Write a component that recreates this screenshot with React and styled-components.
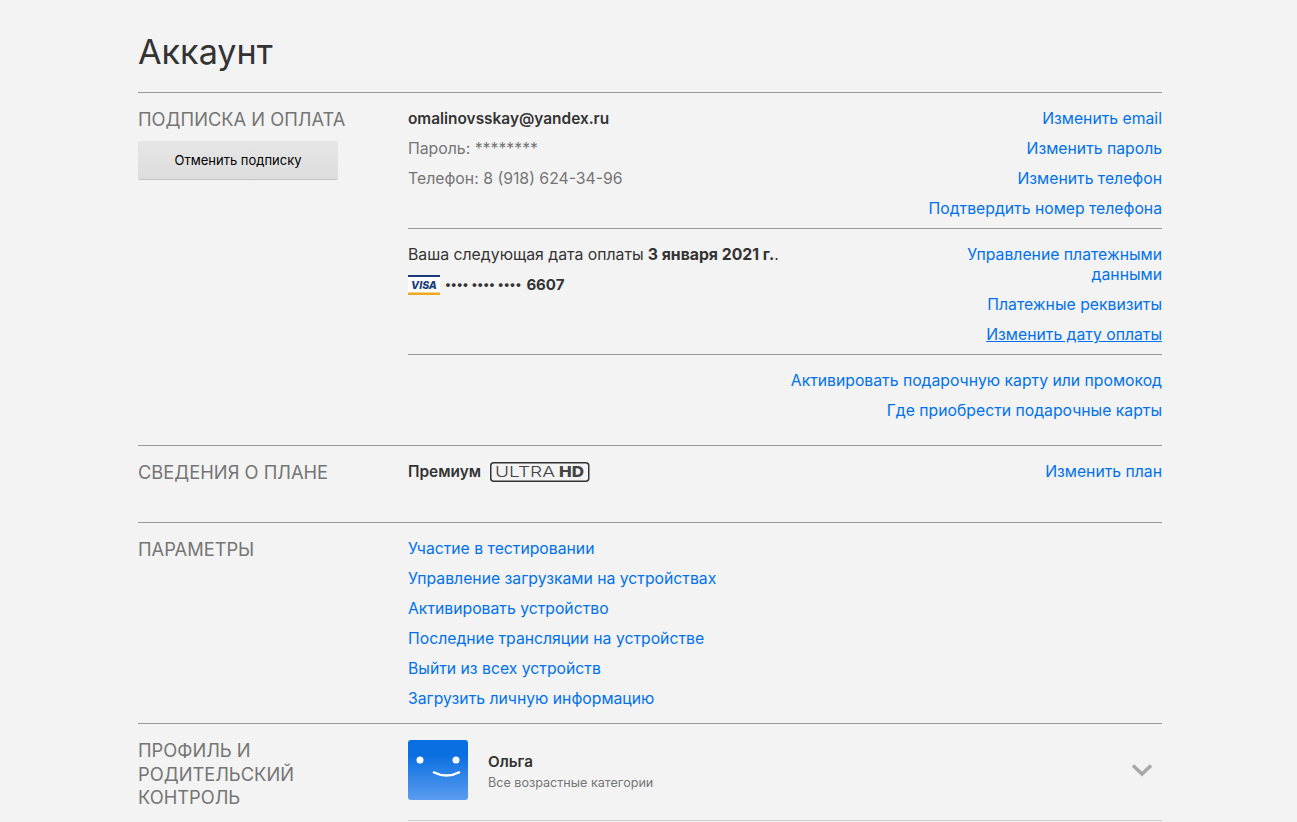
import React from 'react';
import styled, { createGlobalStyle } from 'styled-components';

const Global = createGlobalStyle`
  html, body { margin: 0; padding: 0; background: #f3f3f3; height: 100%; overflow: hidden; }
  body { font-family: Inter, "Noto Sans", "Liberation Sans", sans-serif; color: #333; }
`;
const Page = styled.main`
  width: 1024px;
  margin-left: 138px;
  height: 822px;
  overflow: hidden;
`;
const Title = styled.h1`
  margin: 0;
  height: 92px;
  padding-top: 29px;
  box-sizing: border-box;
  font-size: 34.2px;
  line-height: 46px;
  font-weight: 400;
  color: #333;
`;
const Section = styled.section`
  display: grid;
  grid-template-columns: 270px 754px;
  border-top: 1px solid #999;
  padding-bottom: ${p => p.$pb || 0}px;
`;
const Side = styled.div`
  padding-top: 15px;
`;
const Heading = styled.h2`
  margin: 0;
  width: 215px;
  font-size: 18.3px;
  line-height: 23.5px;
  font-weight: 400;
  color: #757575;
  text-transform: uppercase;
`;
const CancelButton = styled.button`
  display: block;
  width: 200px;
  height: 38px;
  margin-top: 9px;
  padding: 0;
  border: 0;
  border-radius: 2px;
  background: linear-gradient(#e6e6e6, #dddddd);
  box-shadow: 0 1px 0 rgba(0, 0, 0, 0.2);
  font: 400 13px Inter, sans-serif;
  color: #000;
`;
const Main = styled.div`
  padding-top: 10px;
`;
const Block = styled.div`
  display: flex;
  justify-content: space-between;
  padding-bottom: 5px;
  border-bottom: ${p => (p.$last ? '0' : '1px solid #999')};
  margin-bottom: ${p => (p.$last ? '0' : '10px')};
`;
const Col = styled.div`
  display: flex;
  flex-direction: column;
  align-items: ${p => (p.$right ? 'flex-end' : 'flex-start')};
  max-width: ${p => p.$max || 'none'};
`;
const Row = styled.div`
  display: flex;
  align-items: center;
  padding: 6px 0 4px;
  font-size: ${p => (p.$bold ? '15.4px' : '15.8px')};
  line-height: 20px;
  color: ${p => (p.$muted ? '#757575' : '#333')};
  font-weight: ${p => (p.$bold ? 600 : 400)};
  white-space: nowrap;
`;
const PlanRow = styled(Row)`
  height: 20px;
`;
const Strong = styled.b`
  font-weight: 700;
  margin-left: 4px;
`;
const CardNumber = styled.b`
  font-size: 15px;
  font-weight: 700;
  margin-left: 5px;
`;
const Link = styled.a`
  display: block;
  padding: 6px 0 4px;
  font-size: 15.75px;
  line-height: 20px;
  color: #0071eb;
  text-align: ${p => (p.$left ? 'left' : 'right')};
  text-decoration: ${p => (p.$under ? 'underline' : 'none')};
`;
const CardDots = styled.span`
  margin-left: 5px;
  font-size: 12.4px;
  font-weight: 700;
`;
const UhdBadge = styled.svg`
  width: 100px;
  height: 20px;
  margin-left: 9px;
  flex: none;
`;
const Profile = styled.div`
  display: flex;
  align-items: center;
  height: 80px;
  margin-top: 6px;
  padding-bottom: 10px;
  border-bottom: 1px solid #ccc;
`;
const ProfileText = styled.div`
  margin-left: 20px;
  padding-top: 4px;
  flex: 1;
`;
const ProfileName = styled.div`
  font-size: 15.2px;
  line-height: 20px;
  font-weight: 600;
  color: #333;
`;
const ProfileSub = styled.div`
  margin-top: 1px;
  font-size: 12.6px;
  line-height: 20px;
  color: #757575;
`;
const Chevron = styled.svg`
  width: 22px;
  height: 14px;
  margin-right: 9px;
`;
const Avatar = styled.svg`
  width: 60px;
  height: 60px;
  flex: none;
`;

const VisaIcon = () => (
  <svg width="32" height="20" viewBox="0 0 32 20" aria-label="Visa">
    <rect width="32" height="20" fill="#fff" />
    <rect width="32" height="2" fill="#1a3a7c" />
    <rect y="17.5" width="32" height="2.5" fill="#f0a91f" />
    <text x="16" y="14" fontFamily="Inter, sans-serif" fontSize="10.5" fontWeight="800" fontStyle="italic" fill="#1a3a7c" textAnchor="middle">VISA</text>
  </svg>
);

const App = () => (
  <Page>
    <Global />
    <Title>Аккаунт</Title>
    <Section $pb={15}>
      <Side>
        <Heading>Подписка и оплата</Heading>
        <CancelButton>Отменить подписку</CancelButton>
      </Side>
      <Main>
        <Block>
          <Col>
            <Row $bold>omalinovsskay@yandex.ru</Row>
            <Row $muted>Пароль: ********</Row>
            <Row $muted>Телефон: 8 (918) 624-34-96</Row>
          </Col>
          <Col $right>
            <Link>Изменить email</Link>
            <Link>Изменить пароль</Link>
            <Link>Изменить телефон</Link>
            <Link>Подтвердить номер телефона</Link>
          </Col>
        </Block>
        <Block>
          <Col>
            <Row>Ваша следующая дата оплаты<Strong>3 января 2021 г.</Strong>.</Row>
            <Row>
              <VisaIcon />
              <CardDots>•••• •••• ••••</CardDots>
              <CardNumber>6607</CardNumber>
            </Row>
          </Col>
          <Col $right $max="205px">
            <Link>Управление платежными данными</Link>
            <Link>Платежные реквизиты</Link>
            <Link $under>Изменить дату оплаты</Link>
          </Col>
        </Block>
        <Block $last>
          <span />
          <Col $right>
            <Link>Активировать подарочную карту или промокод</Link>
            <Link>Где приобрести подарочные карты</Link>
          </Col>
        </Block>
      </Main>
    </Section>
    <Section $pb={31}>
      <Side>
        <Heading>Сведения о плане</Heading>
      </Side>
      <Main>
        <Block $last>
          <PlanRow $bold>
            Премиум
            <UhdBadge viewBox="0 0 100 20" aria-label="Ultra HD">
              <rect x="0.75" y="0.75" width="98" height="18.5" rx="3" fill="none" stroke="#333" strokeWidth="1.5" />
              <text x="5" y="15" fontFamily="Inter, sans-serif" fontSize="15" fontWeight="300" fill="#444" textLength="60" lengthAdjust="spacingAndGlyphs">ULTRA</text>
              <text x="69" y="15" fontFamily="Inter, sans-serif" fontSize="15" fontWeight="800" fill="#444" textLength="25" lengthAdjust="spacingAndGlyphs">HD</text>
            </UhdBadge>
          </PlanRow>
          <Link>Изменить план</Link>
        </Block>
      </Main>
    </Section>
    <Section $pb={5}>
      <Side>
        <Heading>Параметры</Heading>
      </Side>
      <Main>
        <Block $last>
          <Col>
            <Link $left>Участие в тестировании</Link>
            <Link $left>Управление загрузками на устройствах</Link>
            <Link $left>Активировать устройство</Link>
            <Link $left>Последние трансляции на устройстве</Link>
            <Link $left>Выйти из всех устройств</Link>
            <Link $left>Загрузить личную информацию</Link>
          </Col>
        </Block>
      </Main>
    </Section>
    <Section>
      <Side>
        <Heading>Профиль и родительский контроль</Heading>
      </Side>
      <Profile>
        <Avatar viewBox="0 0 60 60" aria-label="Ольга">
          <defs>
            <linearGradient id="av" x1="0" y1="0" x2="0" y2="1">
              <stop offset="0.25" stopColor="#0a6fe0" />
              <stop offset="1" stopColor="#5a9df0" />
            </linearGradient>
          </defs>
          <rect width="60" height="60" rx="3" fill="url(#av)" />
          <circle cx="12" cy="20" r="3.5" fill="#fff" />
          <circle cx="48" cy="20" r="3.5" fill="#fff" />
          <path d="M25 32 Q38.5 39 52 32" stroke="#fff" strokeWidth="2.5" fill="none" />
        </Avatar>
        <ProfileText>
          <ProfileName>Ольга</ProfileName>
          <ProfileSub>Все возрастные категории</ProfileSub>
        </ProfileText>
        <Chevron viewBox="0 0 22 14" aria-hidden="true">
          <path d="M2 2.5 L11 11 L20 2.5" stroke="#a8a8a8" strokeWidth="3.5" fill="none" />
        </Chevron>
      </Profile>
    </Section>
  </Page>
);

export default App;
